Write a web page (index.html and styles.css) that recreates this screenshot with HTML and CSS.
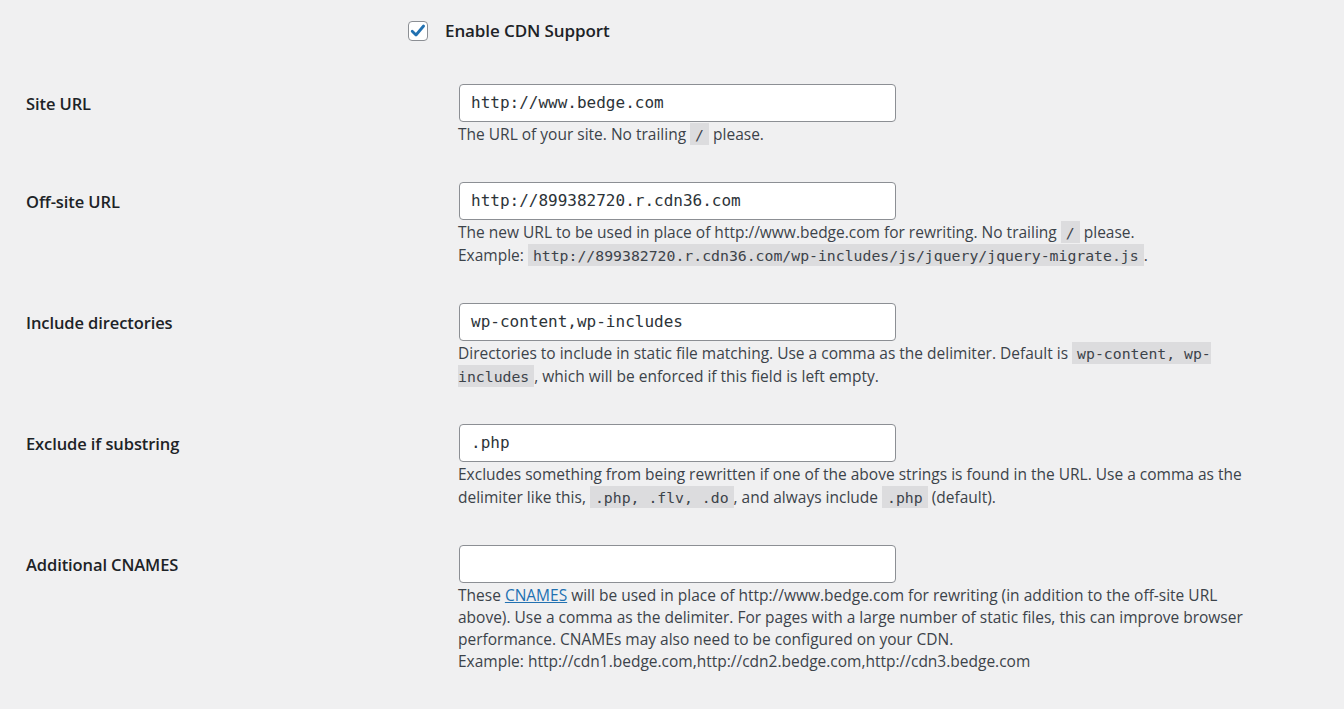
FILE: index.html
```html
<!DOCTYPE html>
<html lang="en">
<head>
<meta charset="utf-8">
<title>CDN Settings</title>
<link rel="stylesheet" href="styles.css">
</head>
<body>
<div class="page">
  <div class="enable-row">
    <span class="checkbox">
      <svg width="18" height="18" viewBox="0 0 18 18"><path d="M3.2 9.2l3.8 3.8 7.6-9" fill="none" stroke="#2271b1" stroke-width="2.8" stroke-linecap="round" stroke-linejoin="round"/></svg>
    </span>
    <span class="enable-label">Enable CDN Support</span>
  </div>

  <div class="form">
    <div class="row">
      <div class="label">Site URL</div>
      <div class="field">
        <div class="input">http://www.bedge.com</div>
        <p class="desc">The URL of your site. No trailing <code>/</code> please.</p>
      </div>
    </div>

    <div class="row">
      <div class="label">Off-site URL</div>
      <div class="field">
        <div class="input">http://899382720.r.cdn36.com</div>
        <p class="desc">The new URL to be used in place of http://www.bedge.com for rewriting. No trailing <code>/</code> please.<br>Example: <code>http://899382720.r.cdn36.com/wp-includes/js/jquery/jquery-migrate.js</code>.</p>
      </div>
    </div>

    <div class="row">
      <div class="label">Include directories</div>
      <div class="field">
        <div class="input">wp-content,wp-includes</div>
        <p class="desc">Directories to include in static file matching. Use a comma as the delimiter. Default is <code>wp-content, wp-includes</code>, which will be enforced if this field is left empty.</p>
      </div>
    </div>

    <div class="row">
      <div class="label">Exclude if substring</div>
      <div class="field">
        <div class="input">.php</div>
        <p class="desc">Excludes something from being rewritten if one of the above strings is found in the URL. Use a comma as the delimiter like this, <code>.php, .flv, .do</code>, and always include <code>.php</code> (default).</p>
      </div>
    </div>

    <div class="row">
      <div class="label">Additional CNAMES</div>
      <div class="field">
        <div class="input"></div>
        <p class="desc desc-tight">These <a href="#">CNAMES</a> will be used in place of http://www.bedge.com for rewriting (in addition to the off-site URL above). Use a comma as the delimiter. For pages with a large number of static files, this can improve browser performance. CNAMEs may also need to be configured on your CDN.<br>Example: http://cdn1.bedge.com,http://cdn2.bedge.com,http://cdn3.bedge.com</p>
      </div>
    </div>
  </div>
</div>
</body>
</html>
```

FILE: styles.css
```css
html, body {
  margin: 0;
  padding: 0;
  background: #f0f0f1;
}
body {
  font-family: "Open Sans", "Noto Sans", sans-serif;
  color: #1d2327;
  width: 1344px;
  height: 709px;
  overflow: hidden;
}
.page {
  padding-left: 26px;
}
.enable-row {
  display: flex;
  align-items: center;
  height: 61px;
  padding-bottom: 1px;
  padding-left: 382px;
}
.checkbox {
  width: 18px;
  height: 18px;
  border: 1px solid #8c8f94;
  border-radius: 4px;
  background: #fff;
  display: flex;
  align-items: center;
  justify-content: center;
  box-sizing: content-box;
}
.enable-label {
  margin-left: 17px;
  font-size: 17px;
  font-weight: 600;
  letter-spacing: -0.1px;
}
.form {
  display: flex;
  flex-direction: column;
}
.row {
  display: grid;
  grid-template-columns: 432px 1fr;
  padding: 22px 0 14px;
}
.label {
  font-size: 16.5px;
  font-weight: 600;
  line-height: 40px;
  letter-spacing: -0.1px;
}
.input {
  margin-left: 1px;
  width: 437px;
  height: 38px;
  box-sizing: border-box;
  border: 1px solid #8c8f94;
  border-radius: 4px;
  background: #fff;
  padding: 0 11px;
  font-family: "DejaVu Sans Mono", monospace;
  font-size: 16px;
  line-height: 36px;
  color: #2c3338;
}
.desc {
  margin: 1px 0 0;
  width: 790px;
  font-size: 15.5px;
  line-height: 23px;
  color: #3c434a;
}
.desc-tight {
  line-height: 22px;
}
.desc code {
  font-family: "DejaVu Sans Mono", monospace;
  font-size: 14.8px;
  line-height: 20px;
  background: #dcdcde;
  padding: 3px 5px 2px;
}
.desc a {
  color: #2271b1;
}
```
